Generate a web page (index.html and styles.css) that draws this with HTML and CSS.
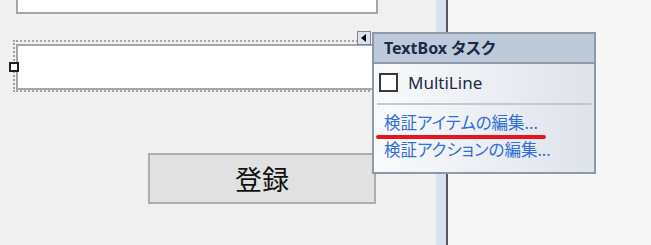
FILE: index.html
```html
<!DOCTYPE html>
<html lang="ja">
<head>
    <meta charset="UTF-8">
    <meta name="viewport" content="width=device-width, initial-scale=1.0">
    <title>フォームデザイナー</title>
    <link rel="stylesheet" href="styles.css">
</head>
<body>
    <div class="workspace">
        <div class="designer">
            <div class="textbox textbox-top"></div>

            <!-- 選択中のテキストボックス -->
            <div class="selection">
                <span class="grip"></span>
                <div class="textbox"></div>
                <span class="smart-tag"></span>
            </div>

            <div class="form-button">登録</div>

            <!-- スマートタグのタスクパネル -->
            <div class="tasks-panel">
                <div class="tasks-header">TextBox タスク</div>
                <div class="tasks-body">
                    <label class="task-check">
                        <span class="check-box"></span>
                        <span>MultiLine</span>
                    </label>
                    <div class="task-separator"></div>
                    <a class="task-link" href="#">検証アイテムの編集...</a>
                    <div class="mark-line"></div>
                    <a class="task-link" href="#">検証アクションの編集...</a>
                </div>
            </div>
        </div>
        <div class="splitter"></div>
        <div class="side-pane"></div>
    </div>
</body>
</html>
```

FILE: styles.css
```css
body {
    margin: 0;
    padding: 0;
    font-family: "Noto Sans", "Noto Sans CJK JP", sans-serif;
    font-feature-settings: "palt";
    overflow: hidden;
}

.workspace {
    display: flex;
    height: 245px;
}

.designer {
    position: relative;
    width: 436px;
    padding-left: 16px;
    box-sizing: border-box;
    background: #f0f0f0;
}

.splitter {
    width: 10px;
    background: #d7e2ee;
    border-right: 2px solid #565656;
}

.side-pane {
    flex: 1;
    background: #f6f6f6;
}

.textbox {
    box-sizing: border-box;
    width: 362px;
    height: 46px;
    background: #fff;
    border: 2px solid #a6a6a6;
}

.textbox-top {
    height: 30px;
    margin-top: -16px;
}

.selection {
    position: relative;
    box-sizing: border-box;
    width: 368px;
    height: 52px;
    margin: 26px 0 0 -3px;
    padding: 2px 1px 0;
    border: 2px dotted #a3a3a3;
}

.grip {
    position: absolute;
    left: -6px;
    top: 20px;
    width: 10px;
    height: 10px;
    box-sizing: border-box;
    background: #fff;
    border: 2px solid #222;
}

.smart-tag {
    position: absolute;
    left: 342px;
    top: -11px;
    width: 14px;
    height: 14px;
    box-sizing: border-box;
    background: #dbe4ee;
    border: 1px solid #7d8896;
}

.smart-tag::after {
    content: "";
    position: absolute;
    left: 3px;
    top: 1.5px;
    border-top: 4.5px solid transparent;
    border-bottom: 4.5px solid transparent;
    border-right: 5px solid #000;
}

.form-button {
    box-sizing: border-box;
    width: 228px;
    height: 51px;
    margin: 61px 0 0 132px;
    display: flex;
    align-items: center;
    justify-content: center;
    background: #e1e1e1;
    border: 2px solid #adadad;
    font-family: "Noto Sans CJK JP", sans-serif;
    font-size: 27px;
    color: #111;
}

.tasks-panel {
    position: absolute;
    left: 372px;
    top: 32px;
    width: 224px;
    height: 142px;
    box-sizing: border-box;
    border: 2px solid #8d98a9;
    display: flex;
    flex-direction: column;
    z-index: 2;
}

.tasks-header {
    height: 28px;
    line-height: 28px;
    padding-left: 10px;
    background: #bec9da;
    border-bottom: 2px solid #8d98a9;
    font-size: 16px;
    font-weight: 700;
    color: #1c2b45;
}

.tasks-body {
    flex: 1;
    background: linear-gradient(to right, #f9fafc, #dfe3ea);
}

.task-check {
    display: flex;
    align-items: center;
    gap: 10px;
    padding: 9px 0 0 5px;
    height: 19px;
    font-size: 17px;
    color: #1c2a48;
}

.check-box {
    width: 19px;
    height: 19px;
    box-sizing: border-box;
    background: #fff;
    border: 2px solid #3a3a3a;
}

.task-separator {
    height: 2px;
    margin: 11px 2px 0 3px;
    background: #c3c8d1;
}

.task-link {
    display: block;
    padding-left: 10px;
    line-height: 22px;
    font-size: 16.5px;
    color: #2f6fd6;
    text-decoration: none;
}

.task-separator + .task-link {
    margin-top: 7px;
}

.mark-line {
    width: 170px;
    height: 4px;
    margin: 1px 0 0 2px;
    border-radius: 2px;
    background: #e8131d;
}
```
